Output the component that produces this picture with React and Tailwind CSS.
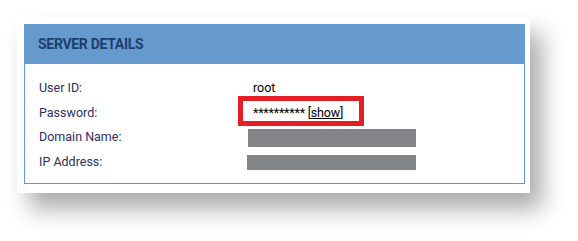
import React from "react";

const rows = [
  { label: "User ID:", value: "root" },
  { label: "Password:", value: "password" },
  { label: "Domain Name:", value: "domain" },
  { label: "IP Address:", value: "ip" },
];

const ServerDetails = () => {
  return (
    <div className="w-[578px] h-[241px] bg-white pl-[17px] pt-[17px]" style={{ fontFamily: "Roboto, 'Liberation Sans', sans-serif" }}>
      <div className="w-[513px] h-[176px] bg-white pl-[7px] pt-[7px] shadow-[12px_16px_22px_rgba(0,0,0,0.33)]">
        <div className="w-[501px] h-[160px] border border-[#5b9bd5]">
          <div className="h-[40px] bg-[#6699cc] flex items-center pl-[14px] -mx-px -mt-px">
            <h2 className="text-[14px] font-bold text-[#1c3f6e] tracking-[-0.3px]">SERVER DETAILS</h2>
          </div>
          <div className="pt-[12px] pl-[14px]">
            {rows.map((row) => (
              <div key={row.label} className="flex items-center h-[24.7px]">
                <div className="w-[214px] text-[12.5px] text-[#2e2e5c]">{row.label}</div>
                <div className="relative flex-1 h-full flex items-center">
                  {row.value === "root" && (
                    <span className="text-[12.5px] text-black">root</span>
                  )}
                  {row.value === "password" && (
                    <>
                      <span className="text-[12.5px] text-black tracking-[-0.2px]">
                        ********** [<span className="underline">show</span>]
                      </span>
                      <div className="absolute left-[-15px] top-[-5px] w-[126px] h-[30px] border-[5px] border-[#e31e24]" />
                    </>
                  )}
                  {row.value === "domain" && (
                    <div className="ml-[-5px] mt-[1px] w-[168px] h-[18px] bg-[#838488]" />
                  )}
                  {row.value === "ip" && (
                    <div className="ml-[-6px] w-[169px] h-[15px] bg-[#838488]" />
                  )}
                </div>
              </div>
            ))}
          </div>
        </div>
      </div>
    </div>
  );
};

export default function App() {
  return <ServerDetails />;
}
